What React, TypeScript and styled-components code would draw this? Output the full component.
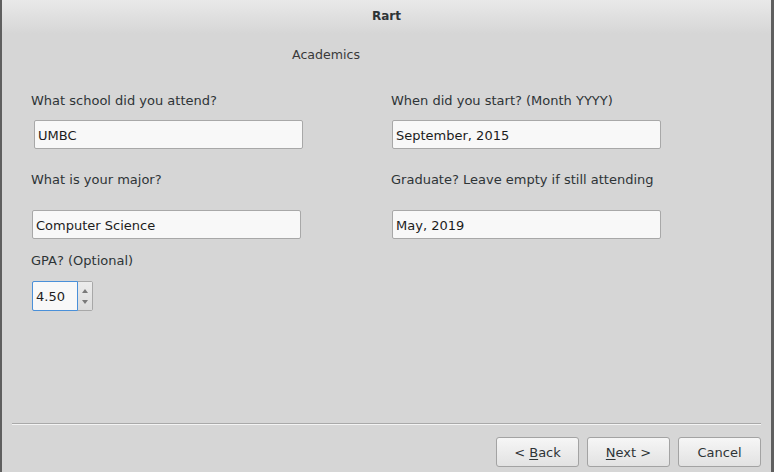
import React from "react";
import styled, { createGlobalStyle } from "styled-components";

const Global = createGlobalStyle`
  html, body { margin: 0; padding: 0; background: #d6d6d6; }
  body { font-family: "DejaVu Sans", "Liberation Sans", sans-serif; }
  * { box-sizing: border-box; }
`;

const Window = styled.div`
  width: 774px;
  height: 472px;
  display: flex;
  flex-direction: column;
  background: #d6d6d6;
  border-left: 2px solid #5f5f5f;
  border-right: 3px solid #5f5f5f;
  color: #2e3436;
`;

const TitleBar = styled.div`
  height: 34px;
  flex: none;
  display: flex;
  align-items: center;
  justify-content: center;
  padding-bottom: 2px;
  background: linear-gradient(#e9e9e9, #d6d6d6);
  font-weight: bold;
  font-size: 12px;
  color: #2e3436;
`;

const Subtitle = styled.div`
  height: 46px;
  padding-left: 290px;
  padding-top: 13px;
  font-size: 12.6px;
  line-height: 16px;
  color: #3a3a3a;
`;

const Form = styled.div`
  display: grid;
  grid-template-columns: 360px 1fr;
  grid-template-rows: 40px 29px 61px 29px 42px 30px;
  padding-left: 29px;
`;

const Label = styled.div`
  display: flex;
  align-items: center;
  font-size: 13px;
  color: #2e3436;
`;

const Input = styled.div<{ $indent?: number }>`
  width: 269px;
  height: 29px;
  margin-left: ${(p) => p.$indent ?? 0}px;
  display: flex;
  align-items: center;
  padding: 1px 0 0 3px;
  background: #f8f8f8;
  border: 1px solid #a8a8a8;
  border-radius: 2px;
  font-size: 13px;
  color: #1c1c1c;
`;

const Spin = styled.div`
  width: 61px;
  height: 30px;
  margin-left: 1px;
  display: flex;
  border: 1px solid #a8a8a8;
  border-radius: 2px;
  background: #f8f8f8;
`;

const SpinField = styled.div`
  width: 46px;
  margin: -1px 0 -1px -1px;
  display: flex;
  align-items: center;
  padding: 1px 0 0 3px;
  border: 1px solid #4a90d9;
  border-radius: 2px 0 0 2px;
  background: #f8f8f8;
  font-size: 13px;
  color: #1c1c1c;
`;

const SpinButtons = styled.div`
  flex: 1;
  display: flex;
  flex-direction: column;
  align-items: center;
  justify-content: space-around;
  padding: 3px 0;
  background: linear-gradient(#ececec, #dcdcdc);
`;

const Arrow = styled.div<{ $down?: boolean }>`
  width: 0;
  height: 0;
  border-left: 3px solid transparent;
  border-right: 3px solid transparent;
  ${(p) =>
    p.$down
      ? "border-top: 4px solid #7a7a7a;"
      : "border-bottom: 4px solid #7a7a7a;"}
`;

const Spacer = styled.div`
  flex: 1;
`;

const Separator = styled.div`
  margin: 0 10px 0 10px;
  height: 2px;
  border-top: 1px solid #a9a9a9;
  border-bottom: 1px solid #f4f4f4;
`;

const ButtonRow = styled.div`
  display: flex;
  justify-content: flex-end;
  gap: 8px;
  padding: 12px 10px 5px 0;
`;

const Button = styled.button`
  width: 83px;
  height: 30px;
  border: 1px solid #a3a3a3;
  border-radius: 3px;
  background: linear-gradient(#f6f6f6, #e2e2e2);
  font-family: "DejaVu Sans", sans-serif;
  font-size: 13px;
  color: #2e3436;
  padding: 0;
  u { text-decoration: underline; text-underline-offset: 2px; }
`;

export default function App() {
  return (
    <>
      <Global />
      <Window>
        <TitleBar>Rart</TitleBar>
        <Subtitle>Academics</Subtitle>
        <Form>
          <Label>What school did you attend?</Label>
          <Label>When did you start? (Month YYYY)</Label>
          <Input $indent={3}>UMBC</Input>
          <Input $indent={1}>September, 2015</Input>
          <Label>What is your major?</Label>
          <Label>Graduate? Leave empty if still attending</Label>
          <Input $indent={1}>Computer Science</Input>
          <Input $indent={1}>May, 2019</Input>
          <Label>GPA? (Optional)</Label>
          <div />
          <Spin>
            <SpinField>4.50</SpinField>
            <SpinButtons>
              <Arrow />
              <Arrow $down />
            </SpinButtons>
          </Spin>
        </Form>
        <Spacer />
        <Separator />
        <ButtonRow>
          <Button>
            &lt; <u>B</u>ack
          </Button>
          <Button>
            <u>N</u>ext &gt;
          </Button>
          <Button>Cancel</Button>
        </ButtonRow>
      </Window>
    </>
  );
}
